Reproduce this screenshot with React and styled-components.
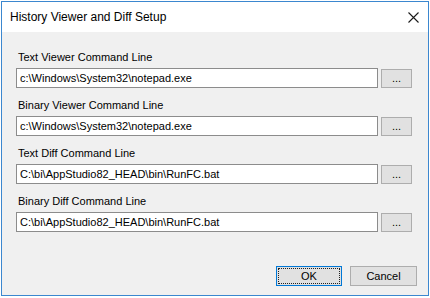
import styled, { createGlobalStyle } from "styled-components";

const fields = [
	{ label: "Text Viewer Command Line", value: "c:\\Windows\\System32\\notepad.exe" },
	{ label: "Binary Viewer Command Line", value: "c:\\Windows\\System32\\notepad.exe" },
	{ label: "Text Diff Command Line", value: "C:\\bi\\AppStudio82_HEAD\\bin\\RunFC.bat" },
	{ label: "Binary Diff Command Line", value: "C:\\bi\\AppStudio82_HEAD\\bin\\RunFC.bat" },
];

export default function App() {
	return (
		<>
			<GlobalStyle />
			<Window>
				<TitleBar>
					<Title>History Viewer and Diff Setup</Title>
					<CloseButton>
						<svg width="11" height="11" viewBox="0 0 11 11">
							<path d="M0.5 0.5L10.5 10.5M10.5 0.5L0.5 10.5" stroke="#1a1a1a" strokeWidth="1.1" />
						</svg>
					</CloseButton>
				</TitleBar>
				<Body>
					{fields.map((f) => (
						<Group key={f.label}>
							<Label>{f.label}</Label>
							<Row>
								<TextBox>{f.value}</TextBox>
								<Browse>...</Browse>
							</Row>
						</Group>
					))}
					<Footer>
						<DialogButton $default>
							<Focus>OK</Focus>
						</DialogButton>
						<DialogButton>Cancel</DialogButton>
					</Footer>
				</Body>
			</Window>
		</>
	);
}

const GlobalStyle = createGlobalStyle`
	body {
		margin: 0;
		background: #ffffff;
		font-family: "Liberation Sans", Arial, sans-serif;
	}
`;

const Window = styled.div`
	margin: 1px 0 0 1px;
	width: 428px;
	height: 295px;
	box-sizing: border-box;
	border: 1px solid #3b87cf;
	display: flex;
	flex-direction: column;
`;

const TitleBar = styled.div`
	height: 30px;
	background: #ffffff;
	display: flex;
	align-items: center;
	justify-content: space-between;
	padding: 0 9px 0 8px;
	flex-shrink: 0;
`;

const Title = styled.span`
	font-size: 12px;
	color: #000000;
`;

const CloseButton = styled.div`
	width: 11px;
	height: 11px;
	display: flex;
`;

const Body = styled.div`
	flex: 1;
	background: #f0f0f0;
	padding: 18px 15px 0 14px;
	display: flex;
	flex-direction: column;
	gap: 10px;
`;

const Group = styled.div`
	display: flex;
	flex-direction: column;
	gap: 3px;
`;

const Label = styled.div`
	font-size: 11px;
	line-height: 15px;
	height: 15px;
	padding-left: 2px;
	color: #000000;
`;

const Row = styled.div`
	display: flex;
	align-items: flex-start;
	gap: 3px;
`;

const TextBox = styled.div`
	width: 362px;
	height: 20px;
	box-sizing: border-box;
	border: 1px solid #8c8c8c;
	background: #ffffff;
	font-size: 11px;
	line-height: 18px;
	padding-left: 3px;
	color: #000000;
	white-space: nowrap;
`;

const Browse = styled.div`
	width: 31px;
	height: 19px;
	margin-top: 1px;
	box-sizing: border-box;
	border: 1px solid #adadad;
	background: #e1e1e1;
	font-size: 11px;
	line-height: 17px;
	text-align: center;
	color: #000000;
`;

const Footer = styled.div`
	margin-top: 24px;
	display: flex;
	justify-content: flex-end;
	gap: 8px;
	margin-right: -4px;
`;

const DialogButton = styled.div`
	width: ${(p) => (p.$default ? 66 : 67)}px;
	height: 20px;
	box-sizing: border-box;
	border: 1px solid ${(p) => (p.$default ? "#0078d7" : "#adadad")};
	background: #e1e1e1;
	font-size: 11px;
	line-height: 18px;
	text-align: center;
	color: #000000;
	padding: ${(p) => (p.$default ? "1px" : "0")};
`;

const Focus = styled.div`
	height: 100%;
	box-sizing: border-box;
	border: 1px dotted #222222;
	line-height: 14px;
`;
